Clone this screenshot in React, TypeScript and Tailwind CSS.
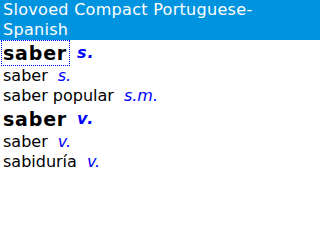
import React from 'react';

type Entry = { word: string; pos: string; head?: boolean; focused?: boolean };

const entries: Entry[] = [
  { word: 'saber', pos: 's.', head: true, focused: true },
  { word: 'saber', pos: 's.' },
  { word: 'saber popular', pos: 's.m.' },
  { word: 'saber', pos: 'v.', head: true },
  { word: 'saber', pos: 'v.' },
  { word: 'sabiduría', pos: 'v.' },
];

const App: React.FC = () => {
  return (
    <div className="w-[320px] h-[240px] bg-white overflow-hidden font-['DejaVu_Sans',sans-serif]">
      <div className="bg-[#0094e0] text-white text-[16px] leading-[20px] tracking-[0.3px] px-[3px] h-[40px]">
        Slovoed Compact Portuguese-
        <br />
        Spanish
      </div>
      <div>
        {entries.map((e, i) =>
          e.head ? (
            <div key={i} className="flex items-center h-[26px]">
              <span
                className={`ml-px pl-[1px] pr-[2px] h-[26px] flex items-center text-[19px] tracking-[0.8px] font-bold text-black border ${
                  e.focused ? 'border-dotted border-[#0000ff]' : 'border-transparent'
                }`}
              >
                {e.word}
              </span>
              <span className="ml-[7px] text-[16px] tracking-[1px] font-bold italic text-[#0000ff]">{e.pos}</span>
            </div>
          ) : (
            <div key={i} className="flex h-[20px] items-center px-[3px] text-[16px] leading-[20px]">
              <span className="text-black">{e.word}</span>
              <span className="ml-[10px] italic text-[#0000ff]">{e.pos}</span>
            </div>
          )
        )}
      </div>
    </div>
  );
};

export default App;
